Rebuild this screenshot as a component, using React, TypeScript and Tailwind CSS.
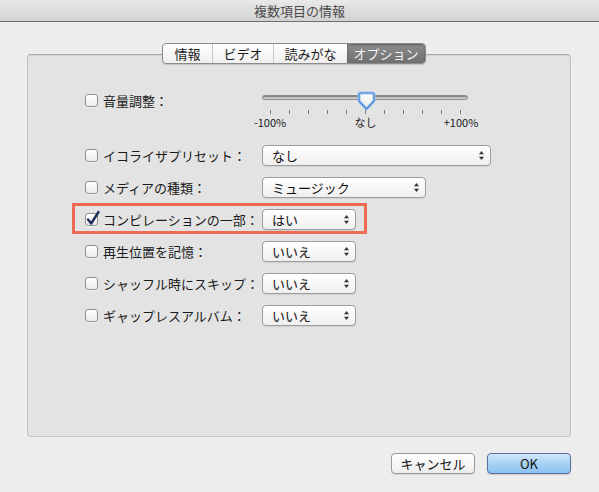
import React from 'react';

const font = "font-['Noto_Sans_CJK_JP','Noto_Sans_CJK_SC',sans-serif]";

function Checkbox({ checked = false }: { checked?: boolean }) {
  return (
    <span className="relative flex-shrink-0 w-[13px] h-[13px] rounded-[3px] border border-[#8f8f8f] bg-linear-to-b from-white to-[#ececec] shadow-[0_1px_0_rgba(255,255,255,0.6)]">
      {checked && (
        <svg
          className="absolute -left-[1px] -top-[4px]"
          width="16"
          height="17"
          viewBox="0 0 16 17"
        >
          <path
            d="M3 9.5 L6.2 13.5 L13.5 2"
            fill="none"
            stroke="#1d2f5e"
            strokeWidth="2.4"
            strokeLinecap="round"
            strokeLinejoin="round"
          />
        </svg>
      )}
    </span>
  );
}

function Popup({ value, className }: { value: string; className: string }) {
  return (
    <div
      className={`flex items-center h-[21px] rounded-[4px] border border-[#9d9d9d] bg-linear-to-b from-white to-[#efefef] shadow-[0_1px_1px_rgba(0,0,0,0.08)] pl-[9px] pr-[5px] ${className}`}
    >
      <span className="flex-1 text-[13px] leading-none text-[#111]">{value}</span>
      <svg width="7" height="11" viewBox="0 0 7 11">
        <path d="M3.5 1 L6 4.3 L1 4.3 Z" fill="#333" />
        <path d="M3.5 10 L6 6.7 L1 6.7 Z" fill="#333" />
      </svg>
    </div>
  );
}

function Label({ text, checked = false }: { text: string; checked?: boolean }) {
  return (
    <div className="flex items-center gap-[5px] w-[177px] h-[16px] flex-shrink-0">
      <Checkbox checked={checked} />
      <span className="text-[13px] leading-none text-[#1a1a1a] whitespace-nowrap">{text}</span>
    </div>
  );
}

function VolumeSlider() {
  const ticks = Array.from({ length: 11 });
  return (
    <div className="relative w-[206px] h-[40px]">
      <div className="mt-[3px] h-[5px] rounded-full border border-[#8a8a8a] bg-linear-to-b from-[#a9a9a9] to-[#d8d8d8] shadow-[inset_0_1px_1px_rgba(0,0,0,0.25)]" />
      {/* thumb */}
      <svg
        className="absolute left-[95px] -top-[1px]"
        width="19"
        height="20"
        viewBox="0 0 19 20"
      >
        <defs>
          <linearGradient id="thumbFill" x1="0" y1="0" x2="0" y2="1">
            <stop offset="0" stopColor="#ffffff" />
            <stop offset="1" stopColor="#e6e6e6" />
          </linearGradient>
        </defs>
        <path
          d="M3.5 2 H15.5 Q17 2 17 3.5 V10 L9.5 18 L2 10 V3.5 Q2 2 3.5 2 Z"
          fill="url(#thumbFill)"
          stroke="#9cc4ee"
          strokeWidth="3"
          strokeLinejoin="round"
        />
        <path
          d="M3.5 2 H15.5 Q17 2 17 3.5 V10 L9.5 18 L2 10 V3.5 Q2 2 3.5 2 Z"
          fill="none"
          stroke="#4f8ad6"
          strokeWidth="1.2"
          strokeLinejoin="round"
        />
      </svg>
      <div className="flex justify-between pl-[8px] pr-[7px] mt-[10px]">
        {ticks.map((_, i) => (
          <span key={i} className="w-px h-[4px] bg-[#7d7d7d]" />
        ))}
      </div>
      <div className="flex justify-between pl-[8px] pr-[7px] mt-[3px] text-[11px] leading-none text-[#1a1a1a]">
        <span className="w-0 flex justify-center whitespace-nowrap">-100%</span>
        <span className="w-0 flex justify-center whitespace-nowrap">なし</span>
        <span className="w-0 flex justify-center whitespace-nowrap">+100%</span>
      </div>
    </div>
  );
}

function Tabs() {
  const tabs = [
    { label: '情報', w: 'w-[49px]' },
    { label: 'ビデオ', w: 'w-[61px]' },
    { label: '読みがな', w: 'w-[74px]' },
    { label: 'オプション', w: 'w-[78px]', active: true },
  ];
  return (
    <div className="relative z-10 ml-[135px] -mb-[10px] flex self-start h-[21px] rounded-[4px] border border-[#8c8c8c] bg-linear-to-b from-white to-[#efefef] shadow-[0_1px_1px_rgba(0,0,0,0.15)] overflow-hidden">
      {tabs.map((t, i) => (
        <div
          key={t.label}
          className={`${t.w} flex items-center justify-center text-[13px] leading-none ${
            i > 0 && !t.active ? 'border-l border-[#c9c9c9]' : ''
          } ${
            t.active
              ? 'bg-linear-to-b from-[#8d8d8d] to-[#6f6f6f] text-[#f4f4f4] shadow-[inset_0_1px_2px_rgba(0,0,0,0.35)]'
              : 'text-[#1a1a1a]'
          }`}
        >
          {t.label}
        </div>
      ))}
    </div>
  );
}

export default function App() {
  const rows = [
    { label: 'イコライザプリセット：', value: 'なし', w: 'w-[229px]' },
    { label: 'メディアの種類：', value: 'ミュージック', w: 'w-[164px]' },
    { label: 'コンピレーションの一部：', value: 'はい', w: 'w-[94px]', checked: true, highlight: true },
    { label: '再生位置を記憶：', value: 'いいえ', w: 'w-[94px]' },
    { label: 'シャッフル時にスキップ：', value: 'いいえ', w: 'w-[94px]' },
    { label: 'ギャップレスアルバム：', value: 'いいえ', w: 'w-[94px]' },
  ];

  return (
    <div className={`w-[599px] h-[492px] flex flex-col bg-[#ededed] ${font}`}>
      {/* title bar */}
      <div className="h-[22px] flex-shrink-0 flex items-center justify-center bg-linear-to-b from-[#e9e9e9] to-[#d2d2d2] border-b border-[#6f6f6f]">
        <span className="text-[13px] leading-none text-[#4b4b4b]">複数項目の情報</span>
      </div>

      <div className="flex flex-col pt-[21px] pl-[27px] pr-[28px]">
        <Tabs />

        {/* panel */}
        <div className="h-[383px] rounded-[4px] border border-[#c3c3c3] border-t-[#a8a8a8] bg-[#e3e3e3] shadow-[inset_0_1px_1px_rgba(0,0,0,0.08)] pl-[57px] pt-[37px]">
          <div className="flex items-start h-[53px]">
            <Label text="音量調整：" />
            <VolumeSlider />
          </div>

          <div className="flex flex-col gap-[11px]">
            {rows.map((r) => (
              <div key={r.label} className="relative flex items-center h-[21px]">
                {r.highlight && (
                  <div className="absolute -left-[13px] -top-[6px] w-[295px] h-[31px] border-[3px] border-[#ee6a55] pointer-events-none" />
                )}
                <Label text={r.label} checked={r.checked} />
                <Popup value={r.value} className={r.w} />
              </div>
            ))}
          </div>
        </div>

        {/* buttons */}
        <div className="flex justify-end gap-[12px] mt-[16px]">
          <button className="w-[84px] h-[21px] rounded-[4px] border border-[#9a9a9a] bg-linear-to-b from-white to-[#ededed] shadow-[0_1px_1px_rgba(0,0,0,0.1)] text-[13px] leading-none text-[#111]">
            キャンセル
          </button>
          <button className="w-[84px] h-[21px] rounded-[4px] border border-[#5a6c9c] bg-linear-to-b from-[#d3e8fb] via-[#a9d1f5] to-[#8dc2f1] shadow-[0_1px_1px_rgba(0,0,0,0.15)] text-[13px] leading-none text-[#111]">
            OK
          </button>
        </div>
      </div>
    </div>
  );
}
